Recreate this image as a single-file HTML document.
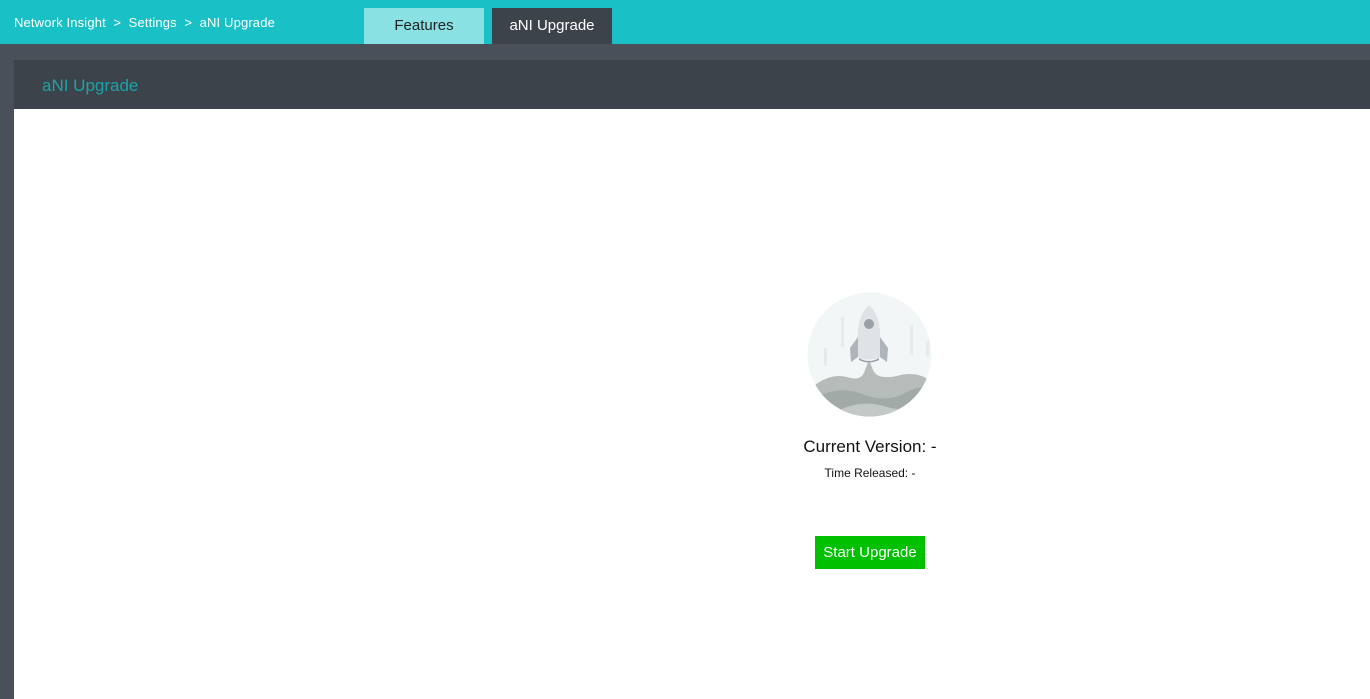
<!DOCTYPE html>
<html><head><meta charset="utf-8"><style>
*{margin:0;padding:0;box-sizing:border-box}
body{width:1370px;height:699px;overflow:hidden;background:#4a5059;font-family:"Liberation Sans",sans-serif;position:relative}
.top{position:absolute;left:0;top:0;width:1370px;height:44px;background:#19c1c6}
.crumb{position:absolute;left:14px;top:15px;color:#fff;font-size:13px;white-space:pre;letter-spacing:0.15px}
.tab{position:absolute;top:8px;height:36px;font-size:15px;text-align:center;line-height:36px}
.t1{left:364px;width:120px;background:#8ae1e3;color:#222}
.t2{left:492px;width:120px;background:#3d434a;color:#fff}
.hdr{position:absolute;left:14px;top:60px;width:1356px;height:49px;background:#3d434a}
.hdr span{position:absolute;left:28px;top:16px;color:#1aa3a8;font-size:17px}
.main{position:absolute;left:14px;top:109px;width:1356px;height:590px;background:#fff}
.c{position:absolute;left:720px;width:300px;text-align:center;color:#111}
.btn{position:absolute;left:815px;top:536px;width:110px;height:33px;background:#00c000;color:#fff;font-size:15px;line-height:33px;text-align:center}
</style></head><body>
<div class="top"><div class="crumb">Network Insight  &gt;  Settings  &gt;  aNI Upgrade</div>
<div class="tab t1">Features</div><div class="tab t2">aNI Upgrade</div></div>
<div class="hdr"><span>aNI Upgrade</span></div>
<div class="main"></div>
<svg style="position:absolute;left:807px;top:292px" width="125" height="125" viewBox="0 0 125 125">
<defs><clipPath id="cp"><circle cx="62.5" cy="62.5" r="62"/></clipPath></defs>
<circle cx="62.5" cy="62.5" r="62" fill="#f3f6f7"/>
<g fill="#e6eaec"><rect x="34" y="25" width="3" height="30"/><rect x="103" y="33" width="3" height="30"/><rect x="17" y="56" width="3" height="18"/><rect x="119" y="49" width="3" height="15"/></g>
<g clip-path="url(#cp)">
<path d="M0 100 Q20 80 40 85 Q55 90 58 78 L62 68 L66 78 Q70 88 90 84 Q110 78 125 90 L125 125 L0 125Z" fill="#b5bcba"/>
<path d="M0 110 Q30 92 55 102 Q80 112 100 100 Q115 92 125 98 L125 125 L0 125Z" fill="#a2aaa8"/>
<path d="M20 125 Q50 105 80 115 Q105 122 125 110 L125 125Z" fill="#c3c9c7"/>
</g>
<path d="M51 40 Q52 22 62 13 Q72 22 73 40 L74 65 Q62 70 50 65Z" fill="#dfe3e5"/>
<path d="M51 45 L43 56 L44 70 L51 65Z M73 45 L81 56 L80 70 L73 65Z" fill="#aeb5ba"/>
<path d="M52 66 Q62 72 72 66 L72 68 Q62 73 52 68Z" fill="#9aa1a6"/>
<circle cx="62" cy="32" r="5" fill="#9aa1a6"/>
</svg>
<div class="c" style="top:437px;font-size:17px">Current Version: -</div>
<div class="c" style="top:466px;font-size:12px">Time Released: -</div>
<div class="btn">Start Upgrade</div>
</body></html>
